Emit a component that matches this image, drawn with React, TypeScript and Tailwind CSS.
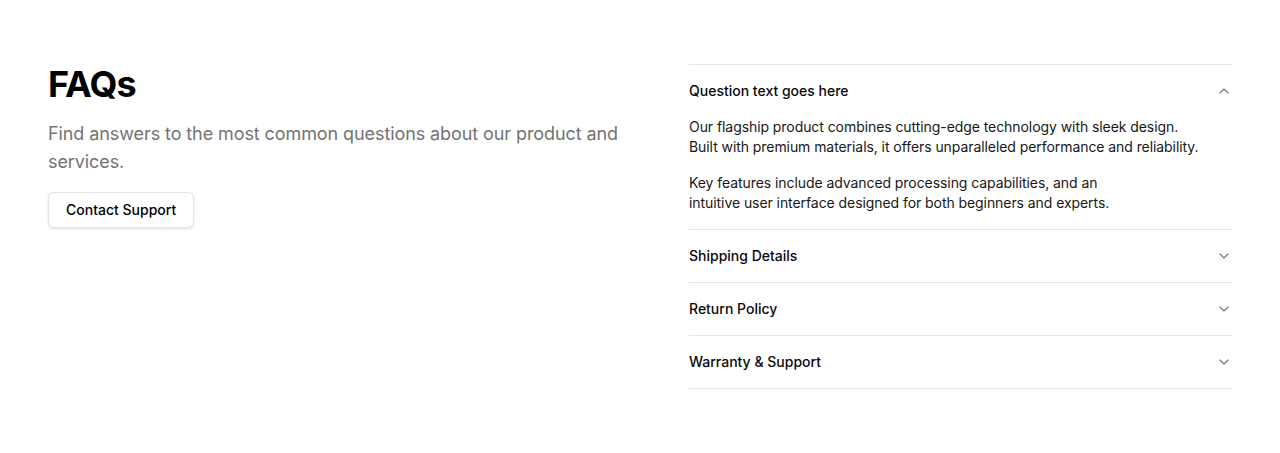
import { ChevronDown, ChevronUp } from 'lucide-react';

const items = [
  { title: 'Shipping Details' },
  { title: 'Return Policy' },
  { title: 'Warranty & Support' },
];

export default function App() {
  return (
    <div
      className="min-h-[453px] bg-white text-neutral-950"
      style={{ fontFamily: 'Inter, "Noto Sans", sans-serif' }}
    >
      <div className="grid grid-cols-[1fr_543px] gap-12 px-12 pt-16 pb-16">
        <div>
          <h2 className="text-4xl font-bold leading-10 tracking-tight text-black">FAQs</h2>
          <p className="mt-4 text-lg leading-7 tracking-[-0.005em] text-neutral-500">
            Find answers to the most common questions about our product and services.
          </p>
          <button className="mt-4 h-9 rounded-md border border-neutral-200 bg-white px-[17px] text-sm font-medium text-black shadow-sm">
            Contact Support
          </button>
        </div>

        <div className="border-t border-neutral-200">
          <div className="border-b border-neutral-200">
            <button className="flex w-full items-center justify-between py-4 text-left text-sm font-medium leading-5">
              Question text goes here
              <ChevronUp className="h-4 w-4 text-neutral-500" strokeWidth={1.75} />
            </button>
            <div className="space-y-4 pb-4 text-sm leading-5 tracking-[-0.005em] text-neutral-900">
              <p>
                Our flagship product combines cutting-edge technology with sleek design.
                <br />
                Built with premium materials, it offers unparalleled performance and reliability.
              </p>
              <p>
                Key features include advanced processing capabilities, and an
                <br />
                intuitive user interface designed for both beginners and experts.
              </p>
            </div>
          </div>
          {items.map((item) => (
            <div key={item.title} className="border-b border-neutral-200">
              <button className="flex w-full items-center justify-between py-4 text-left text-sm font-medium leading-5">
                {item.title}
                <ChevronDown className="h-4 w-4 text-neutral-500" strokeWidth={1.75} />
              </button>
            </div>
          ))}
        </div>
      </div>
    </div>
  );
}
